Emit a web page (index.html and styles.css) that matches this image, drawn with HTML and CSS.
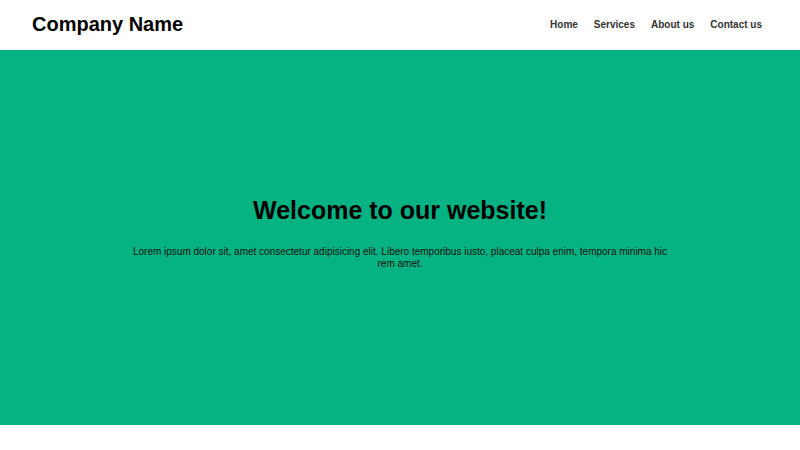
FILE: index.html
```html
<!DOCTYPE html>
<html lang="en">
<head>
<meta charset="utf-8">
<title>Company Name</title>
<link rel="stylesheet" href="styles.css">
</head>
<body>
<header class="site-header">
  <div class="logo">Company Name</div>
  <nav class="nav">
    <a href="#">Home</a>
    <a href="#">Services</a>
    <a href="#">About us</a>
    <a href="#">Contact us</a>
  </nav>
</header>
<section class="hero">
  <h1 class="hero-title">Welcome to our website!</h1>
  <p class="hero-text">Lorem ipsum dolor sit, amet consectetur adipisicing elit. Libero temporibus iusto, placeat culpa enim, tempora minima hic rem amet.</p>
</section>
</body>
</html>
```
FILE: styles.css
```css
* { box-sizing: border-box; }
html, body { margin: 0; padding: 0; }
body {
  font-family: "Liberation Sans", Arial, sans-serif;
  background: #fff;
  color: #000;
}
.site-header {
  height: 50px;
  display: flex;
  align-items: center;
  justify-content: space-between;
  padding: 0 38px 2px 32px;
}
.logo {
  font-size: 20px;
  font-weight: bold;
  color: #000;
}
.nav {
  display: flex;
  gap: 16px;
}
.nav a {
  font-size: 10px;
  font-weight: bold;
  color: #333;
  text-decoration: none;
}
.hero {
  height: 375px;
  background: #04b282;
  display: flex;
  flex-direction: column;
  align-items: center;
  justify-content: center;
  text-align: center;
  padding-bottom: 9px;
}
.hero-title {
  font-size: 25px;
  font-weight: bold;
  margin: 0 0 21px;
}
.hero-text {
  max-width: 540px;
  font-size: 10px;
  line-height: 12px;
  margin: 0;
  color: #111;
}
```
